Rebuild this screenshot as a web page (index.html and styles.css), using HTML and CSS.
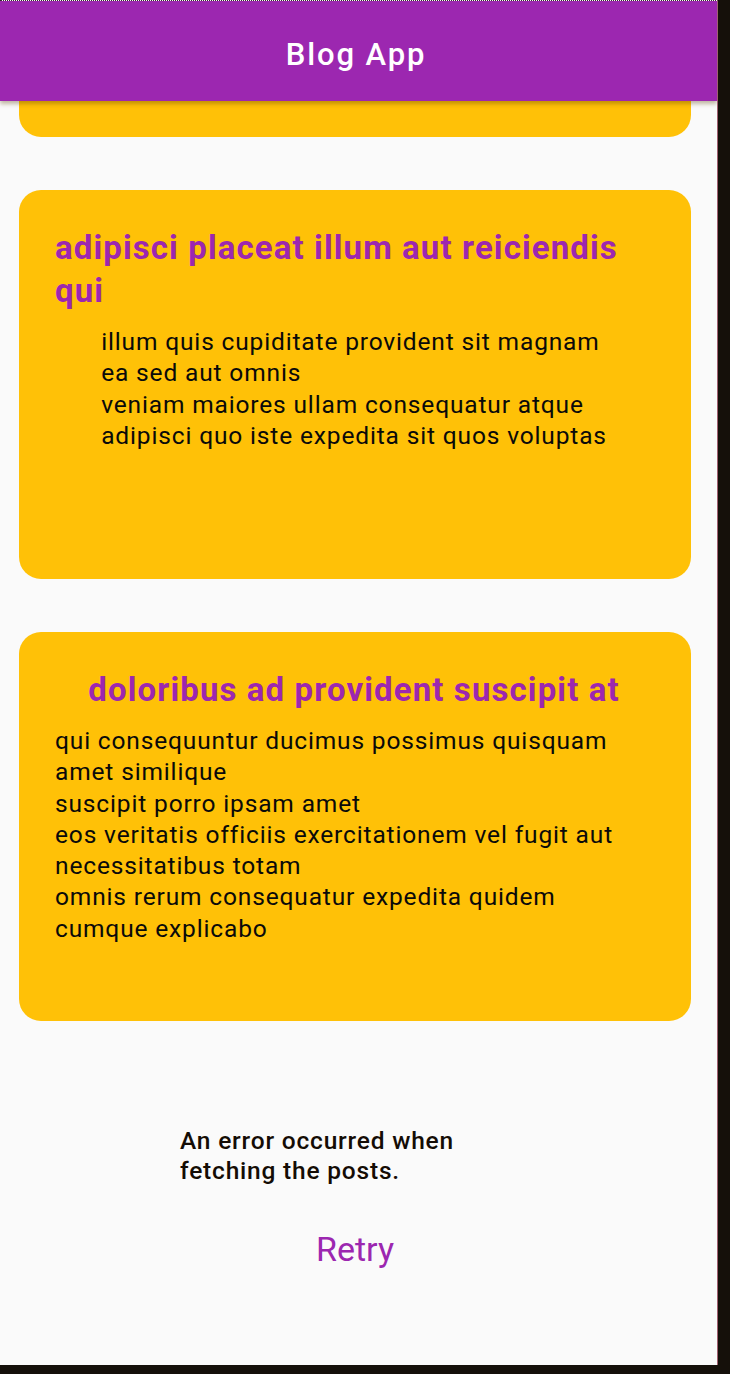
FILE: index.html
```html
<!DOCTYPE html>
<html lang="en">
<head>
<meta charset="utf-8">
<title>Blog App</title>
<link rel="stylesheet" href="styles.css">
</head>
<body>
<div class="device">
  <div class="screen">
    <header class="appbar">
      <h1 class="appbar-title">Blog App</h1>
    </header>
    <main class="feed">
      <article class="card card-cut"></article>
      <article class="card">
        <h2 class="card-title">adipisci placeat illum aut reiciendis qui</h2>
        <p class="card-body">illum quis cupiditate provident sit magnam
ea sed aut omnis
veniam maiores ullam consequatur atque
adipisci quo iste expedita sit quos voluptas</p>
      </article>
      <article class="card">
        <h2 class="card-title">doloribus ad provident suscipit at</h2>
        <p class="card-body">qui consequuntur ducimus possimus quisquam amet similique
suscipit porro ipsam amet
eos veritatis officiis exercitationem vel fugit aut necessitatibus totam
omnis rerum consequatur expedita quidem cumque explicabo</p>
      </article>
      <section class="error">
        <p class="error-text">An error occurred when fetching the posts.</p>
        <button class="retry" type="button">Retry</button>
      </section>
    </main>
  </div>
</div>
</body>
</html>
```
FILE: styles.css
```css
html, body {
  margin: 0;
  padding: 0;
}
body {
  background: #15100a;
  width: 730px;
  height: 1374px;
  overflow: hidden;
  font-family: Roboto, "Liberation Sans", sans-serif;
}
.device {
  width: 730px;
  height: 1374px;
  display: flex;
  align-items: flex-start;
}
.screen {
  width: 718px;
  height: 1365px;
  background: #fafafa;
  display: flex;
  flex-direction: column;
  overflow: hidden;
  border-top: 1px dotted #3a2a30;
  border-right: 1px solid #a06070;
  box-sizing: border-box;
}
.appbar {
  position: relative;
  z-index: 1;
  height: 100px;
  flex: none;
  background: #9c27b0;
  display: flex;
  align-items: center;
  justify-content: center;
  box-shadow: 0 3px 4px rgba(90, 60, 0, 0.35);
}
.appbar-title {
  margin: 0;
  color: #ffffff;
  font-size: 31px;
  font-weight: 500;
  letter-spacing: 1.9px;
  line-height: 1;
  padding: 6px 5px 0 0;
}
.feed {
  display: flex;
  flex-direction: column;
  gap: 53px;
  padding: 0 26px 0 19px;
}
.card {
  background: #ffc107;
  border-radius: 22px;
  height: 389px;
  box-sizing: border-box;
  padding: 36px 38px 36px 36px;
  display: flex;
  flex-direction: column;
  align-items: center;
}
.card-cut {
  height: 36px;
  padding: 0;
  border-radius: 0 0 22px 22px;
}
.card-title {
  margin: 0 0 14px;
  color: #9c27b0;
  font-size: 33px;
  font-weight: 700;
  letter-spacing: 1.1px;
  line-height: 43px;
}
.card-body {
  margin: 0;
  color: #0a0a0a;
  font-size: 24.5px;
  letter-spacing: 0.85px;
  line-height: 31.3px;
  white-space: pre-line;
}
.error {
  display: flex;
  flex-direction: column;
  align-items: center;
  padding-top: 52px;
}
.error-text {
  margin: 0;
  width: 350px;
  color: #140c05;
  font-size: 24.5px;
  font-weight: 500;
  letter-spacing: 0.8px;
  line-height: 30px;
}
.retry {
  margin-top: 43px;
  border: 0;
  background: none;
  padding: 0;
  color: #9c27b0;
  font-family: inherit;
  font-size: 34px;
  line-height: 40px;
}
```
